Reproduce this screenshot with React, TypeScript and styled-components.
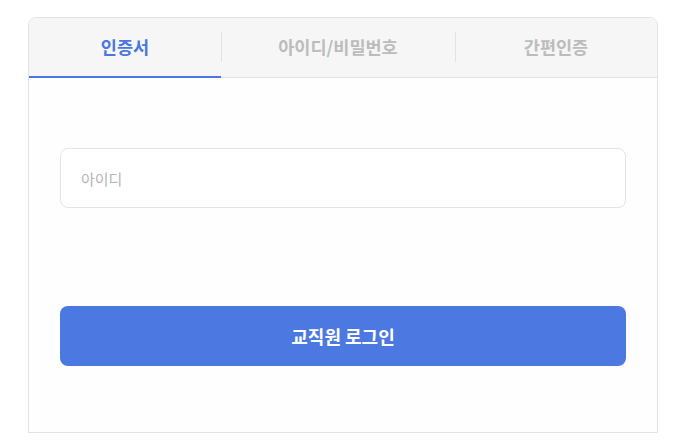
import React, { useState } from 'react';
import styled, { createGlobalStyle } from 'styled-components';

const GlobalStyle = createGlobalStyle`
  html, body {
    margin: 0;
    padding: 0;
    background: #ffffff;
    font-family: "Noto Sans CJK KR", "Noto Sans", sans-serif;
  }
  * { box-sizing: border-box; }
`;

const Page = styled.div`
  padding: 17px 21px 0 28px;
`;

const Card = styled.div`
  width: 630px;
  border: 1px solid #e3e3e3;
  border-radius: 8px 8px 0 0;
  background: #fefefe;
  overflow: hidden;
`;

const TabBar = styled.div`
  display: grid;
  grid-template-columns: 192fr 234fr 202fr;
  height: 60px;
  background: #f6f6f6;
  border-bottom: 1px solid #e3e3e3;
`;

const Tab = styled.button<{ $active: boolean; $divider: boolean }>`
  position: relative;
  display: flex;
  align-items: center;
  justify-content: center;
  border: none;
  background: transparent;
  padding: 0 0 2px;
  margin-bottom: -1px;
  font-family: inherit;
  font-size: 17.5px;
  font-weight: 700;
  color: ${(p) => (p.$active ? '#4a77e0' : '#bcbcbc')};
  border-bottom: 2px solid ${(p) => (p.$active ? '#4a77e0' : 'transparent')};
  cursor: pointer;

  &::before {
    content: '';
    display: ${(p) => (p.$divider ? 'block' : 'none')};
    position: absolute;
    left: 0;
    top: 14px;
    height: 30px;
    width: 1px;
    background: #e2e2e2;
  }
`;

const Body = styled.div`
  display: flex;
  flex-direction: column;
  padding: 70px 31px 66px;
`;

const Input = styled.input`
  height: 60px;
  border: 1px solid #e3e3e3;
  border-radius: 8px;
  padding: 0 20px;
  background: #ffffff;
  font-family: inherit;
  font-size: 15px;
  font-weight: 400;
  color: #333;
  outline: none;

  &::placeholder {
    color: #b5b5b5;
  }
`;

const LoginButton = styled.button`
  margin-top: 98px;
  height: 60px;
  border: none;
  border-radius: 8px;
  background: #4c78e1;
  color: #ffffff;
  font-family: inherit;
  font-size: 18px;
  font-weight: 700;
  cursor: pointer;
`;

const tabs = ['인증서', '아이디/비밀번호', '간편인증'];

export default function App() {
  const [active, setActive] = useState(0);

  return (
    <>
      <GlobalStyle />
      <Page>
        <Card>
          <TabBar>
            {tabs.map((t, i) => (
              <Tab
                key={t}
                $active={i === active}
                $divider={i > 0}
                onClick={() => setActive(i)}
              >
                {t}
              </Tab>
            ))}
          </TabBar>
          <Body>
            <Input placeholder="아이디" />
            <LoginButton>교직원 로그인</LoginButton>
          </Body>
        </Card>
      </Page>
    </>
  );
}
